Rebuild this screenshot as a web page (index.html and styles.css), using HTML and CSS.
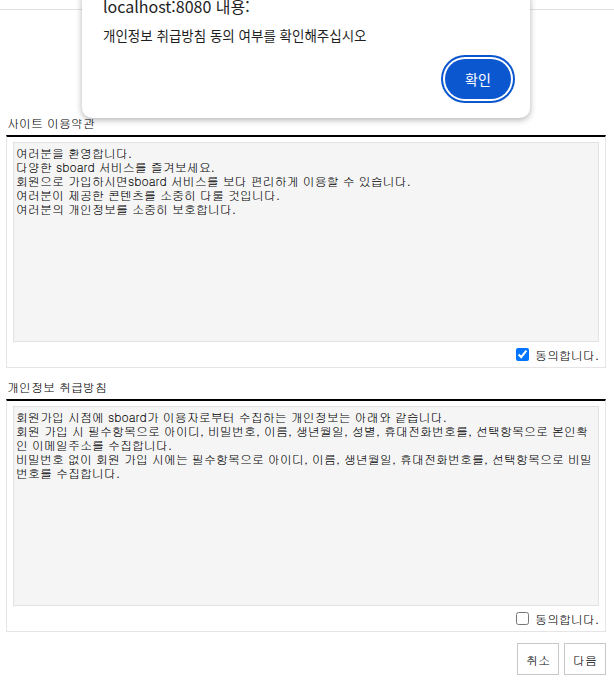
FILE: index.html
```html
<!DOCTYPE html>
<html lang="ko">
<head>
  <meta charset="UTF-8" />
  <meta name="viewport" content="width=device-width, initial-scale=1" />
  <title>회원가입 약관</title>
  <link rel="stylesheet" href="styles.css">
</head>
<body>

<div class="topbar"></div>

<form id="agree-form" class="wrap">
  <h3 class="terms-title">사이트 이용약관</h3>
  <div class="terms-box">
    <textarea class="terms-text" readonly>여러분을 환영합니다.
다양한 sboard 서비스를 즐겨보세요.
회원으로 가입하시면sboard 서비스를 보다 편리하게 이용할 수 있습니다.
여러분이 제공한 콘텐츠를 소중히 다룰 것입니다.
여러분의 개인정보를 소중히 보호합니다.</textarea>
    <div class="agree-row">
      <label><input type="checkbox" id="agree1" checked> 동의합니다.</label>
    </div>
  </div>

  <h3 class="terms-title">개인정보 취급방침</h3>
  <div class="terms-box">
    <textarea class="terms-text" readonly>회원가입 시점에 sboard가 이용자로부터 수집하는 개인정보는 아래와 같습니다.
회원 가입 시 필수항목으로 아이디, 비밀번호, 이름, 생년월일, 성별, 휴대전화번호를, 선택항목으로 본인확인 이메일주소를 수집합니다.
비밀번호 없이 회원 가입 시에는 필수항목으로 아이디, 이름, 생년월일, 휴대전화번호를, 선택항목으로 비밀번호를 수집합니다.</textarea>
    <div class="agree-row">
      <label><input type="checkbox" id="agree2"> 동의합니다.</label>
    </div>
  </div>

  <div class="btn-row">
    <button type="button" class="btn">취소</button>
    <button type="submit" class="btn">다음</button>
  </div>
</form>

<div class="alert-dialog">
  <div class="alert-title">localhost:8080 내용:</div>
  <div class="alert-msg">개인정보 취급방침 동의 여부를 확인해주십시오</div>
  <div class="alert-actions">
    <button type="button" class="alert-ok">확인</button>
  </div>
</div>

</body>
</html>
```

FILE: styles.css
```css
body {
  margin: 0;
  font-family: Gulim, "Noto Sans CJK KR", sans-serif;
  font-size: 12px;
  color: #000;
  background: #fff;
}
.topbar {
  height: 9px;
  border-bottom: 1px solid #e3e3e3;
}
.wrap {
  width: 600px;
  padding-left: 6px;
  margin-top: 105px;
}
.terms-title {
  margin: 11px 0 0;
  padding: 0 0 4px 1px;
  font-size: 12px;
  font-weight: 500;
  line-height: 16px;
}
.wrap .terms-title:first-child {
  margin-top: 0;
}
.terms-box {
  border: 1px solid #e5e5e5;
  border-top: 2px solid #000;
  padding: 5px 6px 0;
}
.terms-text {
  display: block;
  width: 100%;
  height: 200px;
  box-sizing: border-box;
  margin: 0;
  padding: 3px 2px;
  border: 1px solid #dfe3e6;
  background: #f5f5f5;
  font-family: Gulim, "Noto Sans CJK KR", sans-serif;
  font-size: 12px;
  font-weight: 500;
  line-height: 14px;
  color: #000;
  word-break: break-all;
  resize: none;
  outline: none;
}
.agree-row {
  display: flex;
  justify-content: flex-end;
  align-items: center;
  height: 25px;
}
.agree-row label {
  display: flex;
  align-items: center;
  font-weight: 500;
}
.agree-row input {
  width: 13px;
  height: 13px;
  margin: 0 6px 0 0;
}
.btn-row {
  display: flex;
  justify-content: flex-end;
  gap: 5px;
  margin-top: 11px;
}
.btn {
  width: 42px;
  height: 32px;
  padding: 0;
  border: 1px solid #c8c8c8;
  background: #fff;
  font-family: Gulim, "Noto Sans CJK KR", sans-serif;
  font-size: 12px;
  font-weight: 500;
  color: #000;
}
.alert-dialog {
  position: absolute;
  top: -5px;
  left: 82px;
  width: 448px;
  box-sizing: border-box;
  padding: 0 17px 17px 21px;
  background: #fff;
  border-radius: 0 0 10px 10px;
  box-shadow: 0 2px 6px rgba(0, 0, 0, 0.3);
  font-family: "Noto Sans CJK KR", sans-serif;
  color: #1f1f1f;
}
.alert-title {
  font-size: 16px;
  line-height: 22px;
}
.alert-msg {
  margin-top: 9px;
  font-size: 13.5px;
  line-height: 18px;
}
.alert-actions {
  display: flex;
  justify-content: flex-end;
  margin-top: 13px;
}
.alert-ok {
  width: 66px;
  height: 40px;
  margin: 2px;
  border: none;
  border-radius: 20px;
  background: #0b57d0;
  box-shadow: 0 0 0 2px #fff, 0 0 0 4px #0b57d0;
  color: #fff;
  font-family: "Noto Sans CJK KR", sans-serif;
  font-size: 14px;
}
```
